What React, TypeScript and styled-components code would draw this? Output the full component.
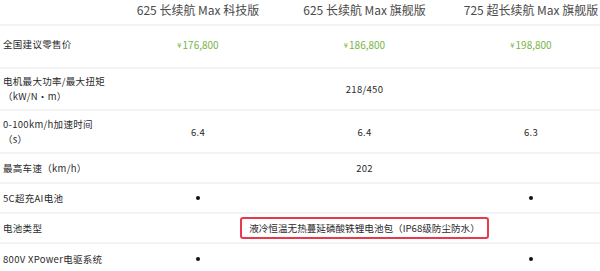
import React from "react";
import styled, { createGlobalStyle } from "styled-components";

type Cell = { kind: "text" | "price" | "dot" | "empty"; value?: string };

type SpecRow = {
  label: string[];
  height: number;
  lift?: number;
  cells?: Cell[];
  merged?: { value: string; boxed?: boolean };
};

const GlobalStyle = createGlobalStyle`
  html, body {
    margin: 0;
    padding: 0;
    background: #ffffff;
    overflow: hidden;
  }
  body {
    font-family: "Noto Sans CJK SC", "Noto Sans", "Liberation Sans", sans-serif;
    color: #333333;
  }
`;

/* ---------------- Table ---------------- */

const Table = styled.div`
  width: 614px;
  display: flex;
  flex-direction: column;
`;

const Row = styled.div<{ $h: number; $first?: boolean; $lift?: number }>`
  display: grid;
  grid-template-columns: 115px 166px 167px 166px;
  height: ${(p) => p.$h}px;
  box-sizing: border-box;
  border-top: ${(p) => (p.$first ? "none" : "2px solid #f3f3f3")};
  padding-bottom: ${(p) => p.$lift ?? 0}px;
  align-items: center;
`;

const HeadCell = styled.div`
  text-align: center;
  font-size: 12px;
  line-height: 16px;
  color: #4a4a4a;
  white-space: nowrap;
`;

const Label = styled.div`
  font-size: 9.5px;
  line-height: 15px;
  letter-spacing: 0.3px;
  color: #2a2a2a;
  padding-left: 3px;
  white-space: nowrap;
`;

const Value = styled.div`
  display: flex;
  justify-content: center;
  align-items: center;
  font-size: 9.5px;
  color: #2a2a2a;
  letter-spacing: 0.3px;
`;

const Price = styled(Value)`
  color: #79b447;
  font-size: 10px;
  letter-spacing: 0;
`;

const Yen = styled.span`
  font-size: 7.5px;
  margin-right: 1px;
`;

const Dot = styled.span`
  width: 4px;
  height: 4px;
  border-radius: 50%;
  background: #111111;
`;

const Merged = styled.div`
  grid-column: 2 / span 3;
  display: flex;
  justify-content: center;
  align-items: center;
  font-size: 9.5px;
  color: #2a2a2a;
  letter-spacing: 0.3px;
`;

const Boxed = styled.span`
  border: 2px solid #e8394c;
  border-radius: 3px;
  padding: 2px 7px;
  font-size: 9.6px;
  line-height: 14px;
  letter-spacing: 0;
  color: #2a2a2a;
  white-space: nowrap;
`;

/* ---------------- Data ---------------- */

const models = ["625 长续航 Max 科技版", "625 长续航 Max 旗舰版", "725 超长续航 Max 旗舰版"];

const rows: SpecRow[] = [
  {
    label: ["全国建议零售价"],
    height: 43,
    lift: 5,
    cells: [
      { kind: "price", value: "176,800" },
      { kind: "price", value: "186,800" },
      { kind: "price", value: "198,800" },
    ],
  },
  {
    label: ["电机最大功率/最大扭矩", "（kW/N·m）"],
    height: 42,
    merged: { value: "218/450" },
  },
  {
    label: ["0-100km/h加速时间", "（s）"],
    height: 43,
    cells: [
      { kind: "text", value: "6.4" },
      { kind: "text", value: "6.4" },
      { kind: "text", value: "6.3" },
    ],
  },
  { label: ["最高车速（km/h）"], height: 30, merged: { value: "202" } },
  {
    label: ["5C超充AI电池"],
    height: 30,
    cells: [{ kind: "dot" }, { kind: "empty" }, { kind: "dot" }],
  },
  {
    label: ["电池类型"],
    height: 30,
    merged: { value: "液冷恒温无热蔓延磷酸铁锂电池包（IP68级防尘防水）", boxed: true },
  },
  {
    label: ["800V XPower电驱系统"],
    height: 32,
    cells: [{ kind: "dot" }, { kind: "empty" }, { kind: "dot" }],
  },
];

function renderCell(c: Cell, i: number) {
  if (c.kind === "price")
    return (
      <Price key={i}>
        <Yen>¥</Yen>
        {c.value}
      </Price>
    );
  if (c.kind === "dot")
    return (
      <Value key={i}>
        <Dot />
      </Value>
    );
  if (c.kind === "empty") return <Value key={i} />;
  return <Value key={i}>{c.value}</Value>;
}

export default function App() {
  return (
    <>
      <GlobalStyle />
      <Table>
        <Row $h={24} $first $lift={5}>
          <div />
          {models.map((m) => (
            <HeadCell key={m}>{m}</HeadCell>
          ))}
        </Row>

        {rows.map((r) => (
          <Row key={r.label[0]} $h={r.height} $lift={r.lift}>
            <Label>
              {r.label.map((l) => (
                <div key={l}>{l}</div>
              ))}
            </Label>
            {r.merged ? (
              <Merged>{r.merged.boxed ? <Boxed>{r.merged.value}</Boxed> : r.merged.value}</Merged>
            ) : (
              r.cells?.map(renderCell)
            )}
          </Row>
        ))}
      </Table>
    </>
  );
}
